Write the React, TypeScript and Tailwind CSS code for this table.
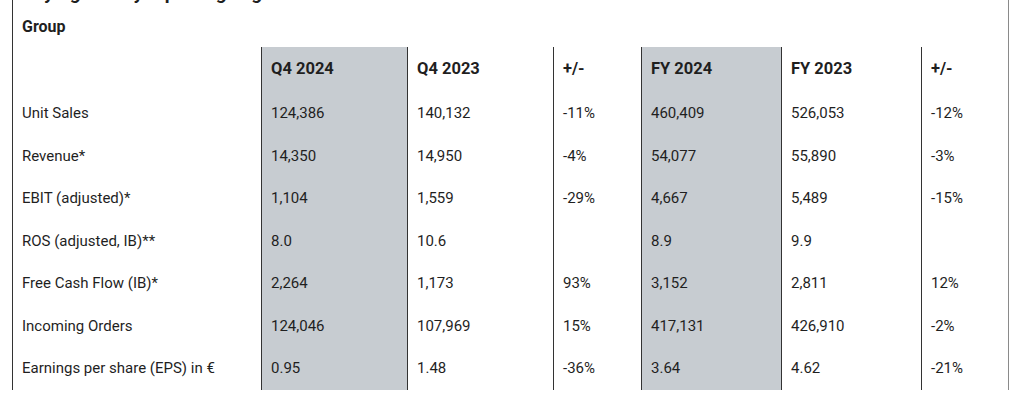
const ROWS = [
  { label: 'Unit Sales', q24: '124,386', q23: '140,132', qd: '-11%', f24: '460,409', f23: '526,053', fd: '-12%' },
  { label: 'Revenue*', q24: '14,350', q23: '14,950', qd: '-4%', f24: '54,077', f23: '55,890', fd: '-3%' },
  { label: 'EBIT (adjusted)*', q24: '1,104', q23: '1,559', qd: '-29%', f24: '4,667', f23: '5,489', fd: '-15%' },
  { label: 'ROS (adjusted, IB)**', q24: '8.0', q23: '10.6', qd: '', f24: '8.9', f23: '9.9', fd: '' },
  { label: 'Free Cash Flow (IB)*', q24: '2,264', q23: '1,173', qd: '93%', f24: '3,152', f23: '2,811', fd: '12%' },
  { label: 'Incoming Orders', q24: '124,046', q23: '107,969', qd: '15%', f24: '417,131', f23: '426,910', fd: '-2%' },
  { label: 'Earnings per share (EPS) in €', q24: '0.95', q23: '1.48', qd: '-36%', f24: '3.64', f23: '4.62', fd: '-21%' },
]

type Key = 'q24' | 'q23' | 'qd' | 'f24' | 'f23' | 'fd'

const COLUMNS: { key: Key; title: string; width: string; shaded?: boolean }[] = [
  { key: 'q24', title: 'Q4 2024', width: 'w-[146px]', shaded: true },
  { key: 'q23', title: 'Q4 2023', width: 'w-[146px]' },
  { key: 'qd', title: '+/-', width: 'w-[88px]' },
  { key: 'f24', title: 'FY 2024', width: 'w-[140px]', shaded: true },
  { key: 'f23', title: 'FY 2023', width: 'w-[140px]' },
  { key: 'fd', title: '+/-', width: 'w-[87px]' },
]

export default function App() {
  return (
    <div className="w-[1024px] h-[411px] bg-white overflow-hidden text-[#1f1f1f] font-['Roboto',sans-serif]">
      <div className="ml-[12px] w-[997px] border-l border-l-[#333] border-r border-r-[#8a8a8a]">
        {/* heading of the page above, only its descenders show */}
        <div className="h-[4px] overflow-hidden pl-[9px]">
          <p className="-mt-[19px] text-[19px] leading-[24px] font-bold whitespace-nowrap">
            Key figures by reporting segment
          </p>
        </div>

        <div className="h-[43px] pt-[3px] pl-[9px] flex items-center text-[16px] font-bold">Group</div>

        <div className="flex text-[15px]">
          <div className="w-[248px]">
            <div className="h-[45px]" />
            {ROWS.map((r) => (
              <div key={r.label} className="h-[42.5px] pl-[9px] flex items-center whitespace-nowrap">
                {r.label}
              </div>
            ))}
          </div>

          {COLUMNS.map((c, i) => (
            <div
              key={c.key + i}
              className={`${c.width} border-l border-[#333] ${c.shaded ? 'bg-[#c7ccd1]' : ''}`}
            >
              <div className="h-[45px] pl-[9px] flex items-center text-[16.5px] font-bold">{c.title}</div>
              {ROWS.map((r) => (
                <div key={r.label} className="h-[42.5px] pl-[9px] flex items-center">
                  {r[c.key]}
                </div>
              ))}
            </div>
          ))}
        </div>
      </div>
    </div>
  )
}
